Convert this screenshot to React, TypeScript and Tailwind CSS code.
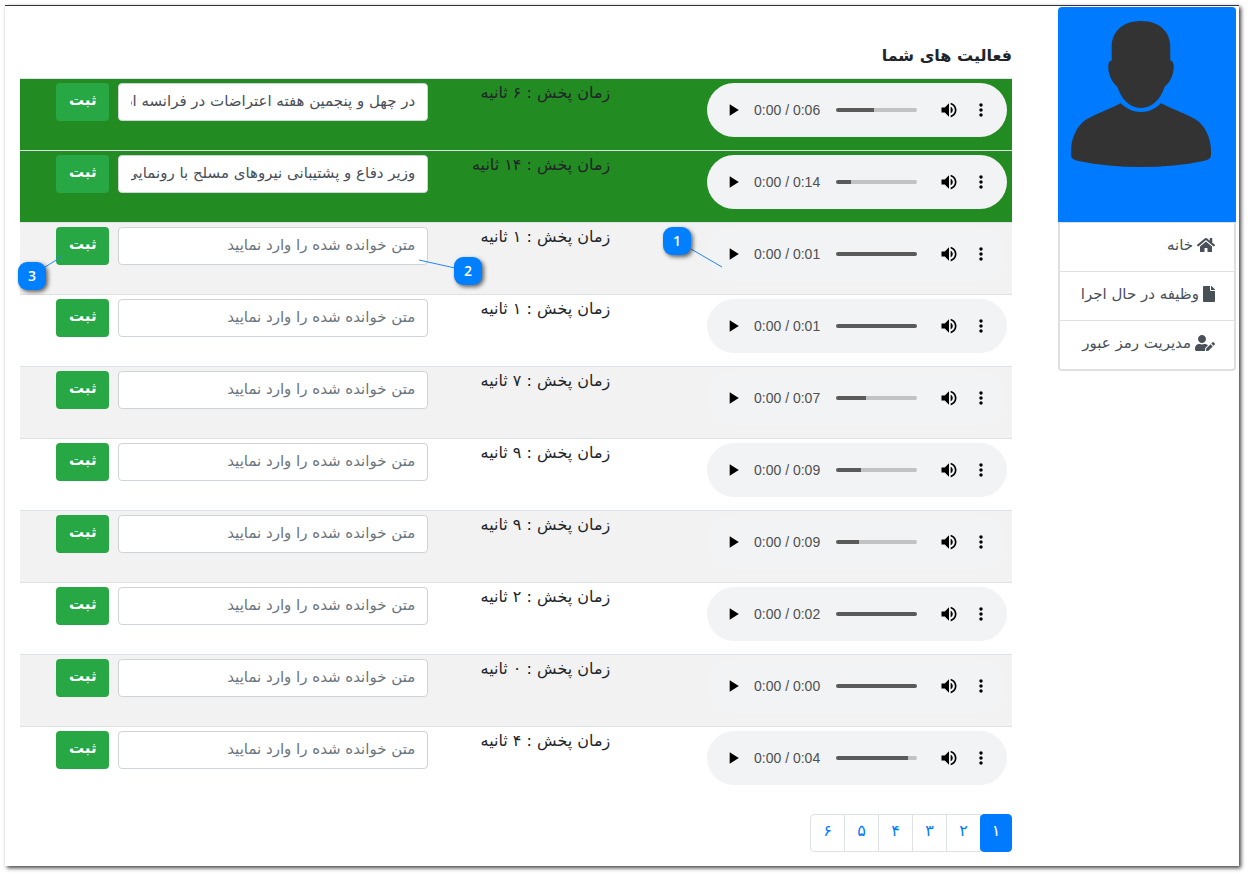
import { FaFile, FaHome, FaUserEdit } from "react-icons/fa";
import type { IconType } from "react-icons";

type Activity = {
  seconds: string;
  total: string;
  buffered: number;
  text?: string;
};

const activities: Activity[] = [
  { seconds: "۶", total: "0:06", buffered: 47, text: "در چهل و پنجمین هفته اعتراضات در فرانسه ادامه دارد" },
  { seconds: "۱۴", total: "0:14", buffered: 19, text: "وزیر دفاع و پشتیبانی نیروهای مسلح با رونمایی" },
  { seconds: "۱", total: "0:01", buffered: 100 },
  { seconds: "۱", total: "0:01", buffered: 100 },
  { seconds: "۷", total: "0:07", buffered: 37 },
  { seconds: "۹", total: "0:09", buffered: 31 },
  { seconds: "۹", total: "0:09", buffered: 29 },
  { seconds: "۲", total: "0:02", buffered: 100 },
  { seconds: "۰", total: "0:00", buffered: 100 },
  { seconds: "۴", total: "0:04", buffered: 89 },
];

const menu: { label: string; icon: IconType; iconWidth: string }[] = [
  { label: "خانه", icon: FaHome, iconWidth: "w-[18px]" },
  { label: "وظیفه در حال اجرا", icon: FaFile, iconWidth: "w-3" },
  { label: "مدیریت رمز عبور", icon: FaUserEdit, iconWidth: "w-5" },
];

const pages = ["۱", "۲", "۳", "۴", "۵", "۶"];

function PlayerButton({ label, path }: { label: string; path: string }) {
  return (
    <button type="button" aria-label={label} className="flex size-8 shrink-0 items-center justify-center">
      <svg viewBox="0 0 24 24" className="size-5 fill-black">
        <path d={path} />
      </svg>
    </button>
  );
}

function Player({ total, buffered }: { total: string; buffered: number }) {
  return (
    <div dir="ltr" className="flex h-[54px] w-[300px] items-center rounded-full bg-[#f1f3f4] px-2.5">
      <PlayerButton label="پخش" path="M8 5v14l11-7z" />
      <span className="ml-[5px] font-['Liberation_Sans',sans-serif] text-sm whitespace-nowrap text-[#505050]">
        0:00 / {total}
      </span>
      <input
        type="range"
        aria-label="موقعیت پخش"
        defaultValue={0}
        className="mx-4 h-1 min-w-0 flex-1 appearance-none rounded-full [&::-webkit-slider-thumb]:size-0 [&::-webkit-slider-thumb]:appearance-none"
        style={{ background: `linear-gradient(to right, #5a5a5a ${buffered}%, #c1c2c3 ${buffered}%)` }}
      />
      <PlayerButton
        label="صدا"
        path="M3 9v6h4l5 5V4L7 9H3zm13.5 3c0-1.77-1.02-3.29-2.5-4.03v8.05c1.48-.73 2.5-2.25 2.5-4.02zM14 3.23v2.06c2.89.86 5 3.54 5 6.71s-2.11 5.85-5 6.71v2.06c4.01-.91 7-4.49 7-8.77s-2.99-7.86-7-8.77z"
      />
      <PlayerButton
        label="گزینه‌ها"
        path="M12 8c1.1 0 2-.9 2-2s-.9-2-2-2-2 .9-2 2 .9 2 2 2zm0 2c-1.1 0-2 .9-2 2s.9 2 2 2 2-.9 2-2-.9-2-2-2zm0 6c-1.1 0-2 .9-2 2s.9 2 2 2 2-.9 2-2-.9-2-2-2z"
      />
    </div>
  );
}

function ActivityRow({ item, index }: { item: Activity; index: number }) {
  const background = item.text ? "bg-[#228b22]" : index % 2 === 0 ? "bg-[#f2f2f2]" : "bg-white";
  return (
    <tr className={`h-[72px] border-t border-[#dee2e6] align-top ${background}`}>
      <td className="px-[5px] py-1">
        <Player total={item.total} buffered={item.buffered} />
      </td>
      <td className="px-[5px] py-1 text-base leading-5 whitespace-nowrap">زمان پخش : {item.seconds} ثانیه</td>
      <td className="px-[5px] py-1">
        <form className="flex gap-[9px]" onSubmit={(event) => event.preventDefault()}>
          <input
            type="text"
            aria-label="متن خوانده شده"
            placeholder="متن خوانده شده را وارد نمایید"
            defaultValue={item.text}
            className="h-[38px] w-[310px] rounded border border-[#ced4da] bg-white px-3 pb-0.5 text-[15px] text-[#495057] placeholder:text-[#6c757d]"
          />
          <button type="submit" className="h-[38px] w-[53px] rounded bg-[#28a745] pb-1 text-[15px] font-bold text-white">
            ثبت
          </button>
        </form>
      </td>
    </tr>
  );
}

function Sidebar() {
  return (
    <aside className="w-[178px] shrink-0">
      <div className="rounded-t bg-[#007bff]">
        <svg viewBox="0 0 178 215" className="block w-full fill-[#333]" role="img" aria-label="تصویر کاربر">
          <path d="M83 14C64 14 53.700 25 53.700 40V53.500C51 54 50.300 56 50.300 60C50.300 68 54 75 59.500 80C63 92 72 101 83 101C94 101 103 92 106.500 80C112 75 115.700 68 115.700 60C115.700 56 115 54 112.300 53.500V40C112.300 25 102 14 83 14Z" />
          <path d="M62.700 96.300C52 102 40 106 29 112C19 118 13 131 13 144V148C13 151.500 16 153 20.500 154C40 158 61 160 83 160C105 160 126 158 145.500 154C150 153 153 151.500 153 148V144C153 131 147 118 137 112C126 106 114 102 103 96.300C97 102 91 105 83 105C75 105 69 102 62.700 96.300Z" />
        </svg>
      </div>
      <nav className="rounded-b border-x-2 border-b-2 border-[#dfdfdf]">
        {menu.map(({ label, icon: Icon, iconWidth }) => (
          <a
            key={label}
            href="#"
            className="flex h-[49px] items-center gap-1 border-t border-[#dfdfdf] px-[19px] pb-1 text-[15px] text-[#495057]"
          >
            <Icon className={`h-4 shrink-0 ${iconWidth}`} />
            <span className="whitespace-nowrap">{label}</span>
          </a>
        ))}
      </nav>
    </aside>
  );
}

function Badge({ number, className }: { number: number; className: string }) {
  return (
    <span
      className={`absolute flex size-7 items-center justify-center rounded-[9px] bg-[#0080ff] font-['Open_Sans',sans-serif] text-sm font-semibold text-white shadow-[2px_2px_4px_rgba(0,0,0,0.6)] ${className}`}
    >
      {number}
    </span>
  );
}

function Callouts() {
  return (
    <div dir="ltr" className="pointer-events-none absolute inset-0">
      <svg className="absolute inset-0 size-full stroke-[#2088f5]" strokeWidth="1">
        <line x1="686" y1="243" x2="717" y2="261" />
        <line x1="414" y1="254" x2="450" y2="262" />
        <line x1="37" y1="263" x2="56" y2="251" />
      </svg>
      <Badge number={1} className="top-[221px] left-[658px]" />
      <Badge number={2} className="top-[251px] left-[449px]" />
      <Badge number={3} className="top-[256px] left-[13px]" />
    </div>
  );
}

export default function App() {
  return (
    <div dir="rtl" className="bg-white pt-[5px] pr-[9px] pb-[9px] pl-[5px] font-['DejaVu_Sans',sans-serif] text-[#212529]">
      <div className="relative flex gap-[46px] border-t border-[#35323d] bg-white pt-px pr-[3px] pb-3.5 pl-[15px] shadow-[2px_2px_4px_rgba(0,0,0,0.75)]">
        <Sidebar />
        <main className="min-w-0 flex-1">
          <h1 className="flex h-[71px] items-end pb-2.5 text-base font-bold">فعالیت های شما</h1>
          <table className="w-full table-fixed border-collapse">
            <colgroup>
              <col className="w-2/5" />
              <col className="w-[182px]" />
              <col />
            </colgroup>
            <tbody>
              {activities.map((item, index) => (
                <ActivityRow key={index} item={item} index={index} />
              ))}
            </tbody>
          </table>
          <nav aria-label="صفحه‌ها" className="mt-[15px] flex">
            {pages.map((page, index) => (
              <a
                key={page}
                href="#"
                aria-current={index === 0 ? "page" : undefined}
                className={`flex h-[38px] items-center justify-center border pb-1 text-base ${
                  index === 0
                    ? "z-10 w-8 rounded border-[#007bff] bg-[#007bff] text-white"
                    : "w-[35px] border-[#dee2e6] text-[#007bff] not-first:-mr-px last:rounded-l"
                }`}
              >
                {page}
              </a>
            ))}
          </nav>
        </main>
        <Callouts />
      </div>
    </div>
  );
}
